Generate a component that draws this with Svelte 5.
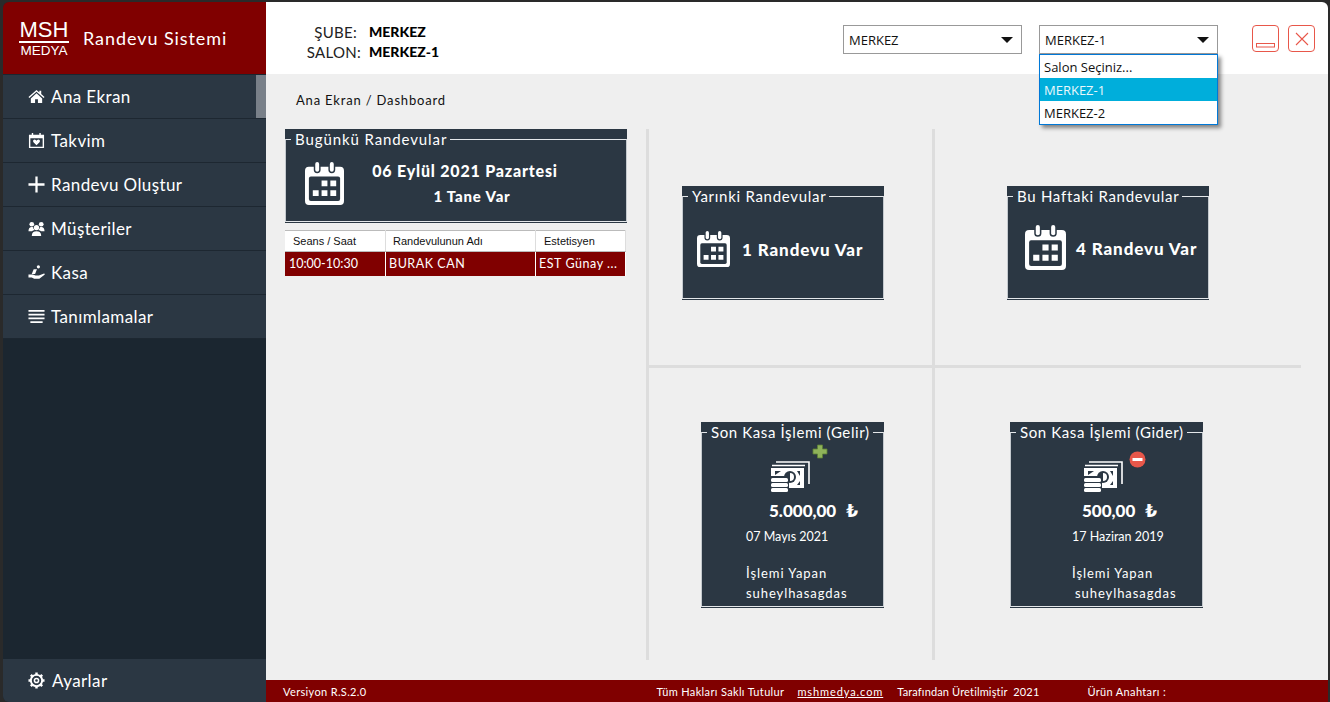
<script>
  const menu = [
    { label: "Ana Ekran", icon: "home" },
    { label: "Takvim", icon: "cal" },
    { label: "Randevu Oluştur", icon: "plus" },
    { label: "Müşteriler", icon: "users" },
    { label: "Kasa", icon: "hand" },
    { label: "Tanımlamalar", icon: "bars" }
  ];
  const salons = ["Salon Seçiniz...", "MERKEZ-1", "MERKEZ-2"];
</script>

{#snippet calendar(size)}
  <svg class="cal" width={size} height={size * 1.1} viewBox="0 0 40 44">
    <path fill="#fff" d="M4 5h5v3a3.5 3.5 0 0 0 7 0V5h8v3a3.5 3.5 0 0 0 7 0V5h5a4 4 0 0 1 4 4v31a4 4 0 0 1-4 4H4a4 4 0 0 1-4-4V9a4 4 0 0 1 4-4z" />
    <rect fill="#fff" x="10.5" y="0" width="4" height="10" rx="2" />
    <rect fill="#fff" x="25.5" y="0" width="4" height="10" rx="2" />
    <rect fill="#2b3743" x="4" y="15" width="32" height="25" rx="2" />
    <path fill="#fff" d="M17 19h6v6h-6zM26 19h6v6h-6zM8 29h6v6H8zM17 29h6v6h-6zM26 29h6v6h-6z" />
  </svg>
{/snippet}

{#snippet money()}
  <svg class="money" width="39" height="32" viewBox="0 0 39 32">
    <path fill="none" stroke="#fff" stroke-width="1.6" d="M5 1h33v22M1 4.500h33" />
    <path fill="#fff" d="M0 7h33v20H18v-6h-1V15H0z" />
    <circle fill="#2b3743" cx="19" cy="16" r="6" />
    <path fill="#2b3743" d="M4 10h6l-6 4zM29 10v5l-3-5zM29 24v-4l-3 4z" />
    <path fill="#fff" d="M19 12a4 4 0 0 1 0 8z" />
    <rect fill="#fff" x="0" y="17" width="17" height="4" rx="1.500" />
    <rect fill="#fff" x="0" y="22" width="17" height="4" rx="1.500" />
    <rect fill="#fff" x="0" y="27" width="17" height="4" rx="1.500" />
  </svg>
{/snippet}

{#snippet menuIcon(name)}
  <svg class="micon" width="17" height="17" viewBox="0 0 18 18" fill="#fff">
    {#if name === "home"}
      <path d="M9 2 0.500 9.500l1 1L9 4l7.500 6.500 1-1L14 6.400V3h-2v1.700z" />
      <path d="M3 11 9 5.500l6 5.500v5h-4.500v-4h-3v4H3z" />
    {:else if name === "cal"}
      <path d="M4 1h1.500v2H12V1h1.500v2H17v14H1V3h3zM2.500 6.500v9h13v-9z" />
      <path d="M9 14 5.800 10.800a1.700 1.700 0 0 1 0-2.300 1.700 1.700 0 0 1 2.400 0l.8.700.8-.7a1.700 1.700 0 0 1 2.400 0 1.700 1.700 0 0 1 0 2.300z" />
    {:else if name === "plus"}
      <path d="M7.800 0.500h2.400v7.300h7.300v2.400h-7.300v7.300H7.800v-7.300H0.500V7.800h7.300z" />
    {:else if name === "users"}
      <circle cx="9" cy="8" r="2.800" />
      <path d="M4 17c0-3.500 2-5 5-5s5 1.500 5 5z" />
      <circle cx="4" cy="4.500" r="2.500" />
      <circle cx="14" cy="4.500" r="2.500" />
      <path d="M0.500 12c0-3 1.300-4.500 3.500-4.500.5 0 1 .1 1.300.3.200 1.200.8 2.200 1.700 2.900-1.300.3-2.200.7-2.800 1.300zM17.500 12c0-3-1.300-4.500-3.500-4.500-.5 0-1 .1-1.300.3-.2 1.200-.8 2.200-1.700 2.900 1.300.3 2.200.7 2.800 1.300z" />
    {:else if name === "hand"}
      <circle cx="11" cy="3" r="1.700" />
      <path d="M6 5.500h3.500l-2 5H4z" />
      <path d="M0.500 11h4.500l3 1.300h3.500l5.500-2.300c.8 0 1 .8.500 1.300L12 15.500H6.500L4 14.200H0.500z" />
    {:else}
      <path d="M0.500 2h17v2H0.500zM0.500 6h17v2H0.500zM0.500 10h17v2H0.500zM2.500 14h13v2h-13z" />
    {/if}
  </svg>
{/snippet}

<div class="window">
  <aside class="sidebar">
    <div class="brand">
      <div class="logo">
        <span class="logo-top">MSH</span>
        <span class="logo-bottom">MEDYA</span>
      </div>
      <span class="brand-name">Randevu Sistemi</span>
    </div>
    <nav class="menu">
      {#each menu as item}
        <a class="menu-item" href="#top">
          {@render menuIcon(item.icon)}
          <span>{item.label}</span>
        </a>
      {/each}
      <div class="thumb"></div>
    </nav>
    <div class="settings">
      <svg class="micon" width="17" height="17" viewBox="0 0 18 18">
        <circle cx="9" cy="9" r="6" fill="none" stroke="#fff" stroke-width="2" />
        <circle cx="9" cy="9" r="2.200" fill="none" stroke="#fff" stroke-width="1.600" />
        <path stroke="#fff" stroke-width="2.600" d="M9 0.500v3M9 14.500v3M0.500 9h3M14.500 9h3M3 3l2.100 2.100M12.900 12.900 15 15M15 3l-2.100 2.100M5.100 12.900 3 15" />
      </svg>
      <span>Ayarlar</span>
    </div>
  </aside>

  <div class="main">
    <header class="topbar">
      <div class="branch">
        <span class="branch-label sube">ŞUBE:</span><b>MERKEZ</b>
        <span class="branch-label">SALON:</span><b>MERKEZ-1</b>
      </div>
      <div class="combos">
        <div class="combo"><span>MERKEZ</span><i class="caret"></i></div>
        <div class="combo">
          <span>MERKEZ-1</span><i class="caret"></i>
          <ul class="dropdown">
            {#each salons as salon}
              <li class:active={salon === "MERKEZ-1"}>{salon}</li>
            {/each}
          </ul>
        </div>
      </div>
      <div class="win-buttons">
        <button class="win-btn" aria-label="Küçült">
          <svg width="19" height="5" viewBox="0 0 19 5"><rect x="0.500" y="0.500" width="18" height="3.500" fill="none" stroke="#e8574a" /></svg>
        </button>
        <button class="win-btn center" aria-label="Kapat">
          <svg width="14" height="14" viewBox="0 0 14 14"><path fill="none" stroke="#e8574a" stroke-width="1.100" d="M1 1l12 12M13 1 1 13" /></svg>
        </button>
      </div>
    </header>

    <main class="content">
      <div class="crumb">Ana Ekran / Dashboard</div>
      <div class="columns">
        <section class="today">
          <div class="card">
            <fieldset>
              <legend>Bugünkü Randevular</legend>
              <div class="today-body">
                {@render calendar(39)}
                <div class="today-text">
                  <strong>06 Eylül 2021 Pazartesi</strong>
                  <strong class="small">1 Tane Var</strong>
                </div>
              </div>
            </fieldset>
          </div>
          <table>
            <thead>
              <tr><th>Seans / Saat</th><th>Randevulunun Adı</th><th>Estetisyen</th></tr>
            </thead>
            <tbody>
              <tr><td>10:00-10:30</td><td>BURAK CAN</td><td>EST Günay ...</td></tr>
            </tbody>
          </table>
        </section>

        <div class="board">
          <div class="cell c1">
            <div class="card short w202">
              <fieldset>
                <legend>Yarınki Randevular</legend>
                <div class="count">
                  {@render calendar(33)}
                  <strong>1 Randevu Var</strong>
                </div>
              </fieldset>
            </div>
          </div>
          <div class="cell c2">
            <div class="card short w202">
              <fieldset>
                <legend>Bu Haftaki Randevular</legend>
                <div class="count week">
                  {@render calendar(41)}
                  <strong>4 Randevu Var</strong>
                </div>
              </fieldset>
            </div>
          </div>
          <div class="cell c3">
            <div class="card tall w183">
              <fieldset>
                <legend>Son Kasa İşlemi (Gelir)</legend>
                <div class="cash">
                  <div class="cash-icon">
                    {@render money()}
                    <svg class="badge plus" width="16" height="15" viewBox="0 0 16 15">
                      <path fill="#8fb35a" stroke="#5d8235" stroke-width="0.800" d="M5.500 1h5v4H15v5h-4.500v4h-5v-4H1V5h4.500z" />
                    </svg>
                  </div>
                  <strong class="amount">5.000,00 <em>₺</em></strong>
                  <span class="date">07 Mayıs 2021</span>
                  <span class="by">İşlemi Yapan</span>
                  <span class="user">suheylhasagdas</span>
                </div>
              </fieldset>
            </div>
          </div>
          <div class="cell c4">
            <div class="card tall w193">
              <fieldset>
                <legend>Son Kasa İşlemi (Gider)</legend>
                <div class="cash gider">
                  <div class="cash-icon">
                    {@render money()}
                    <svg class="badge minus" width="17" height="17" viewBox="0 0 17 17">
                      <circle cx="8.500" cy="8.500" r="8" fill="#e8574a" />
                      <rect x="3.500" y="7" width="10" height="3" fill="#fff" />
                    </svg>
                  </div>
                  <strong class="amount">500,00 <em>₺</em></strong>
                  <span class="date">17 Haziran 2019</span>
                  <span class="by">İşlemi Yapan</span>
                  <span class="user">suheylhasagdas</span>
                </div>
              </fieldset>
            </div>
          </div>
        </div>
      </div>
    </main>

    <footer class="footer">
      <span class="version">Versiyon R.S.2.0</span>
      <span class="rights">Tüm Hakları Saklı Tutulur</span>
      <u class="site">mshmedya.com</u>
      <span class="made">Tarafından Üretilmiştir&nbsp; 2021</span>
      <span class="key">Ürün Anahtarı :</span>
    </footer>
  </div>
</div>

<style>
  :global(body) {
    margin: 0;
    background: #2a2a2a;
  }
  .window {
    display: flex;
    height: 702px;
    box-sizing: border-box;
    padding: 2px 2px 0 3px;
    background: #2a2a2a;
    font-family: Lato, "Noto Sans", sans-serif;
    color: #fff;
    overflow: hidden;
  }

  /* sidebar */
  .sidebar {
    width: 263px;
    flex: none;
    display: flex;
    flex-direction: column;
    background: #1b2630;
    border-radius: 6px 0 0 6px;
    overflow: hidden;
  }
  .brand {
    height: 72px;
    flex: none;
    display: flex;
    align-items: center;
    gap: 14px;
    padding-left: 16px;
    background: #800000;
  }
  .logo {
    display: flex;
    flex-direction: column;
    width: 50px;
    font-family: "Liberation Sans", sans-serif;
    text-align: center;
  }
  .logo-top {
    font-size: 22px;
    line-height: 21px;
    border-bottom: 2px solid #fff;
    padding-bottom: 1px;
  }
  .logo-bottom {
    font-size: 13.500px;
    line-height: 15px;
  }
  .brand-name {
    font-size: 18px;
    letter-spacing: 0.93px;
  }
  .menu {
    position: relative;
    padding-top: 1px;
  }
  .menu-item {
    display: flex;
    align-items: center;
    gap: 6px;
    height: 43px;
    padding-left: 25px;
    background: #2b3743;
    border-bottom: 1px solid #1d2731;
    color: #fff;
    font-size: 17px;
    letter-spacing: 0.4px;
    text-decoration: none;
  }
  .thumb {
    position: absolute;
    top: 1px;
    right: 0;
    width: 10px;
    height: 43px;
    background: #798089;
  }
  .settings {
    margin-top: auto;
    height: 43px;
    display: flex;
    align-items: center;
    gap: 7px;
    padding-left: 25px;
    background: #2b3743;
    font-size: 17px;
    letter-spacing: 0.4px;
  }

  /* top */
  .main {
    flex: 1;
    display: flex;
    flex-direction: column;
    min-width: 0;
  }
  .topbar {
    height: 72px;
    flex: none;
    display: flex;
    align-items: flex-start;
    background: #fff;
    border-radius: 0 6px 0 0;
    color: #111;
  }
  .branch {
    display: grid;
    grid-template-columns: 95px auto;
    column-gap: 8px;
    font-size: 15px;
    line-height: 20px;
    padding-top: 20px;
    margin-right: auto;
  }
  .branch-label {
    text-align: right;
    color: #222;
    letter-spacing: 0.3px;
  }
  .sube {
    padding-right: 4px;
  }
  .branch b {
    font-size: 14px;
    font-weight: 900;
    color: #000;
  }
  .combos {
    display: flex;
    gap: 17px;
    padding-top: 23px;
  }
  .combo {
    position: relative;
    width: 179px;
    height: 29px;
    box-sizing: border-box;
    display: flex;
    align-items: center;
    justify-content: space-between;
    padding: 0 8px 0 5px;
    border: 1px solid #999;
    background: #fff;
    font-family: "Open Sans", sans-serif;
    font-size: 13px;
    color: #111;
  }
  .caret {
    width: 0;
    height: 0;
    border-left: 6px solid transparent;
    border-right: 6px solid transparent;
    border-top: 6px solid #111;
  }
  .dropdown {
    position: absolute;
    top: 28px;
    left: -1px;
    width: 179px;
    box-sizing: border-box;
    margin: 0;
    padding: 0;
    list-style: none;
    background: #fff;
    border: 1px solid #0078d7;
    box-shadow: 3px 3px 4px rgba(0, 0, 0, 0.45);
    z-index: 3;
  }
  .dropdown li {
    height: 23px;
    line-height: 25px;
    padding-left: 4px;
  }
  .dropdown li.active {
    background: #00aedb;
    color: #eaf8fc;
  }
  .win-buttons {
    display: flex;
    gap: 9px;
    padding: 23px 13px 0 34px;
  }
  .win-btn {
    width: 27px;
    height: 27px;
    display: flex;
    align-items: flex-end;
    justify-content: center;
    padding: 0 0 3px;
    background: #fff;
    border: 1px solid #e8574a;
    border-radius: 4px;
  }
  .win-btn.center {
    align-items: center;
    padding: 0;
  }

  /* content */
  .content {
    flex: 1;
    background: #efefef;
    color: #111;
    min-height: 0;
  }
  .crumb {
    height: 55px;
    box-sizing: border-box;
    padding: 18px 0 0 30px;
    font-size: 13px;
    letter-spacing: 0.82px;
  }
  .columns {
    display: flex;
    padding-left: 19px;
  }
  .today {
    width: 342px;
    flex: none;
    margin-right: 19px;
  }
  .card {
    background: #2b3743;
    color: #fff;
    display: flex;
    box-sizing: border-box;
    padding: 1px 0;
  }
  fieldset {
    flex: 1;
    min-width: 0;
    margin: 0;
    padding: 0;
    border: 1px solid #e4e7ea;
    border-left-color: #c4c9ce;
    border-right-color: #c4c9ce;
  }
  legend {
    margin-left: 5px;
    padding: 0 3px 0 4px;
    font-size: 15px;
    line-height: 18px;
    letter-spacing: 0.72px;
    white-space: nowrap;
  }
  .today legend {
    letter-spacing: 0.9px;
  }
  .tall legend {
    letter-spacing: 0.62px;
  }
  .today .card {
    height: 94px;
  }
  .today-body {
    display: flex;
    align-items: center;
    padding: 13px 0 0 19px;
  }
  .today-text {
    flex: 1;
    display: flex;
    flex-direction: column;
    align-items: center;
    gap: 5px;
    padding-right: 40px;
  }
  .today-text strong {
    font-size: 16px;
    line-height: 20px;
    font-weight: 900;
    letter-spacing: 0.8px;
  }
  .today-text .small {
    font-size: 15px;
    padding-left: 14px;
  }
  table {
    width: 341px;
    margin-top: 7px;
    border-collapse: collapse;
    table-layout: fixed;
    font-family: "Liberation Sans", sans-serif;
    font-size: 11px;
  }
  th {
    height: 19px;
    padding: 0 0 1px 8px;
    background: #fff;
    border-top: 1px solid #bbb;
    border-bottom: 1px solid #bbb;
    border-right: 1px solid #ddd;
    font-weight: 400;
    text-align: left;
    color: #111;
  }
  td {
    height: 22px;
    padding: 0 0 2px 3px;
    background: #800000;
    border-right: 1px solid #fff;
    color: #fff;
    font-family: Lato, sans-serif;
    font-size: 12.500px;
    letter-spacing: 0.55px;
    white-space: nowrap;
    overflow: hidden;
  }
  td:first-child {
    padding-left: 4px;
    letter-spacing: 0;
  }
  th:nth-child(1) { width: 92px; }
  th:nth-child(2) { width: 142px; padding-left: 7px; }

  /* board */
  .board {
    display: grid;
    grid-template-columns: 286px 369px;
    grid-template-rows: 239px 292px;
  }
  .cell {
    box-sizing: border-box;
    border-left: 3px solid #dddddd;
    display: flex;
    align-items: flex-start;
  }
  .c1, .c2 {
    padding-top: 57px;
    border-bottom: 3px solid #dddddd;
  }
  .c3, .c4 {
    padding-top: 54px;
  }
  .c1 { padding-left: 33px; }
  .c2 { padding-left: 72px; }
  .c3 { padding-left: 52px; }
  .c4 { padding-left: 75px; }
  .short { height: 114px; }
  .tall { height: 186px; }
  .w202 { width: 202px; }
  .w183 { width: 183px; }
  .w193 { width: 193px; }
  .count {
    display: flex;
    align-items: center;
    gap: 12px;
    padding: 19px 0 0 14px;
    min-height: 50px;
  }
  .count.week {
    gap: 10px;
    padding-left: 17px;
    padding-top: 18px;
  }
  .count strong {
    font-size: 17px;
    font-weight: 900;
    letter-spacing: 0.9px;
    white-space: nowrap;
  }
  .cash {
    display: flex;
    flex-direction: column;
    font-size: 12.500px;
    padding-left: 44px;
  }
  .cash-icon {
    position: relative;
    margin-left: 25px;
    padding-top: 20px;
    height: 32px;
  }
  .badge {
    position: absolute;
  }
  .badge.plus {
    left: 41px;
    top: 3px;
  }
  .badge.minus {
    left: 45px;
    top: 10px;
  }
  .amount {
    font-size: 17px;
    font-weight: 900;
    line-height: 20px;
    margin: 8px 0 0 23px;
    white-space: nowrap;
  }
  .amount em {
    font-style: normal;
    margin-left: 6px;
    font-family: "DejaVu Sans", sans-serif;
  }
  .date {
    line-height: 18px;
    margin: 7px 0 0;
  }
  .by {
    font-size: 13px;
    letter-spacing: 0.95px;
    line-height: 18px;
    margin-top: 18px;
  }
  .user {
    font-size: 13px;
    letter-spacing: 0.93px;
    line-height: 18px;
    margin-top: 2px;
  }
  .gider {
    padding-left: 61px;
  }
  .gider .cash-icon {
    margin-left: 12px;
  }
  .gider .amount {
    margin-left: 10px;
  }
  .gider .user {
    margin-left: 3px;
  }

  /* footer */
  .footer {
    height: 22px;
    flex: none;
    display: flex;
    align-items: center;
    background: #800000;
    color: #fff;
    font-size: 11px;
    letter-spacing: 0.35px;
    white-space: nowrap;
  }
  .version { margin-left: 17px; }
  .rights { margin-left: 290px; }
  .site { margin-left: 13px; letter-spacing: 0.9px; }
  .made { margin-left: 14px; letter-spacing: 0.15px; }
  .key { margin-left: 48px; }
</style>
